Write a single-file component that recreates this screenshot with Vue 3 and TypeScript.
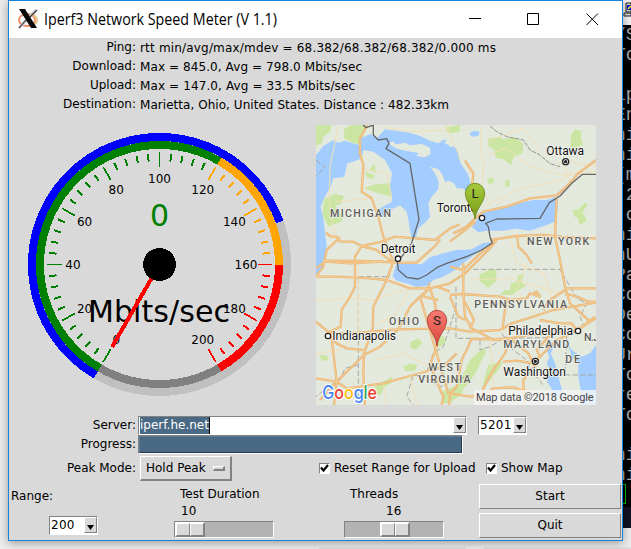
<script setup lang="ts">
interface Tick {
  x1: number
  y1: number
  x2: number
  y2: number
  color: string
  width: number
}

const readings: { label: string; value: string; width: number }[] = [
  { label: 'Ping:', value: 'rtt min/avg/max/mdev = 68.382/68.382/68.382/0.000 ms', width: 356 },
  { label: 'Download:', value: 'Max = 845.0, Avg = 798.0 Mbits/sec', width: 222 },
  { label: 'Upload:', value: 'Max = 147.0, Avg = 33.5 Mbits/sec', width: 215 },
  { label: 'Destination:', value: 'Marietta, Ohio, United States. Distance : 482.33km', width: 309 },
]

const cx = 150.5
const cy = 150.5

function point(value: number, radius: number): [number, number] {
  const a = ((240 - value * 1.5) * Math.PI) / 180
  return [cx + radius * Math.cos(a), cy - radius * Math.sin(a)]
}

function arc(from: number, to: number, radius: number): string {
  const [x1, y1] = point(from, radius)
  const [x2, y2] = point(to, radius)
  const large = (to - from) * 1.5 > 180 ? 1 : 0
  return `M${x1} ${y1}A${radius} ${radius} 0 ${large} 1 ${x2} ${y2}`
}

const ticks: Tick[] = []
for (let v = 0; v <= 200; v += 4) {
  const major = v % 20 === 0
  const [x1, y1] = point(v, major ? 112.5 : 111)
  const [x2, y2] = point(v, major ? 98 : 103.5)
  const color = v < 120 ? '#008000' : v < 160 ? '#ffa500' : '#ff0000'
  ticks.push({ x1, y1, x2, y2, color, width: major ? 1.7 : 2 })
}

const scaleLabels = Array.from({ length: 11 }, (_, i) => {
  const [x, y] = point(i * 20, 86.5)
  return { text: String(i * 20), x, y: y + 4.8 }
})

const terminal: string[] = ['/S', 'To', '', 'ip', 'En', 'ni', 'ni', '[m', ' 2', ' o', 'ni', 'nU', 'Pa', 'Co', 'De', 'Co', 'Ur', 'To', 're', 'To', '', 'ni', 'ni']

const water: string[] = [
  'M18 105L40 78L70 60L85 68L105 62L145 75L152 55L180 42L200 55L225 28L300 38L330 48L360 62L385 70L402 58L420 70L440 85L452 130L475 165L485 205L475 215L455 205L440 205L432 190L415 182L405 187L398 165L385 148L360 140L375 160L386 185L385 208L365 230L355 250L360 290L345 308L325 325L318 352H304L295 300L290 275L270 256L240 270L222 290L205 290L210 265L245 246V222L240 200L246 160L225 120L190 95L160 90L155 115L130 125L112 130L103 170L70 175L62 200L44 230L32 260L40 295L45 335L50 380L42 440L18 465Z',
  'M290 378L312 380L307 396L290 398Z',
  'M263 420L280 432L335 433L360 412L400 400L440 390L485 388L520 368L548 366L543 376L500 400L465 425L440 447L400 470L370 480L350 498L318 500L290 490L260 482L248 468Z',
  'M500 300L512 285L530 272L570 268L620 252L670 240L710 240L735 232L744 260L735 305L710 315L660 332L620 326L580 332L530 332L505 337L486 322Z',
  'M708 680L725 665L735 675L722 700L735 730L750 790L765 835L720 835L725 805L710 785L722 760L710 730L718 712Z',
  'M755 655L775 675L785 710L805 730V770L812 810V855H858V675L840 700L815 710L785 690L768 662Z',
  'M478 40L492 32L510 35L505 48L485 50Z',
]

const islands: string[] = [
  'M235 70L248 64L258 73L285 68L300 76L335 72L360 83L362 102L345 112L320 108L325 99L290 93L260 86Z',
  'M400 66L420 62L436 74L424 82Z',
]

const parks: string[] = [
  'M18 15H65L60 35L40 50L35 70L18 77Z',
  'M103 25L125 15H175L160 45L155 75L130 68L102 55Z',
  'M178 150L194 130L198 160Z',
  'M160 205L195 193L245 190V230L205 220Z',
  'M165 155L195 165L190 178L168 170Z',
  'M42 238L75 222L102 228L95 250L75 258L98 285L95 305L55 320L38 285Z',
  'M405 22L450 15L448 37L415 40Z',
  'M535 55L565 50L580 58L610 50L640 70L638 100L612 110L603 136L580 118L558 115L552 88L535 78Z',
  'M530 180L545 172L555 182L540 195Z',
  'M585 183L600 180L598 200L586 201Z',
  'M785 40L795 28L815 32L812 50L820 72L800 85L780 80Z',
  'M808 265L825 247L833 255L818 275L830 302L810 315L800 290L792 290L788 270L805 270Z',
  'M508 465L540 448L560 448L558 485L535 503L510 485Z',
  'M625 465L642 462L635 490L650 495L605 525L570 525L585 510L600 510L602 490L620 485Z',
  'M302 665L325 655L337 670L318 690L300 682Z',
  'M280 740L300 730L322 735L315 752L285 754Z',
  'M382 655L400 648L408 665L392 680L375 678Z',
  'M175 815L210 790L245 770L250 785L225 800L210 825L185 830Z',
  'M28 705L52 707L55 720L35 723Z',
  'M480 720L520 682L528 695L510 730L500 755L475 790L440 830L420 850H390L420 825L455 775Z',
  'M535 735L580 725L565 750L540 780L518 795Z',
  'M395 815L430 800L460 815L440 835L400 850Z',
]

const roads: string[] = [
  'M172 15L150 55V100L160 135L155 215L185 235L205 290L220 350L250 425L230 480L190 560L188 625L162 700L160 760L165 855',
  'M48 338L62 350H80L90 365L130 365L155 378L215 365L255 350L375 360L420 325L450 313',
  'M40 422L160 423L265 428L320 428L378 375L390 358',
  'M90 352L50 390L40 440L18 470',
  'M155 378L135 410V500L120 530L95 570L92 620L50 640',
  'M155 378L200 390L245 425',
  'M18 445L45 425L120 430L220 425',
  'M18 470L80 470L180 475L230 480L300 505L360 505L420 490L465 460L540 385L560 360',
  'M358 505L330 530L300 560L265 628L210 680L162 705L80 785L30 840',
  'M360 505L375 550L385 620L380 680L360 735L380 785L400 830L395 855',
  'M18 605L60 640H120L260 628L420 625L480 635L570 630L605 610L670 590L730 570L858 548',
  'M50 640L80 670L110 685L160 690',
  'M65 655L80 785L110 805L220 790L310 765L400 740L440 700',
  'M80 785L18 775M80 785L72 855',
  'M430 340L470 320L495 295L520 275L590 260L660 235L740 226L780 190L805 160L858 120',
  'M496 305L465 330L420 365',
  'M540 360L620 348L700 345L755 350L858 355',
  'M740 235L738 280L735 350L750 420L765 500L780 550L840 605',
  'M560 360L510 400L460 450L420 440',
  'M622 350L625 380L650 405L665 430',
  'M420 525L455 522L500 525L570 530L600 540L650 535L660 520L690 530L680 515L670 520',
  'M460 430V520L465 590L485 625L550 660L600 655L650 645L720 640L790 630',
  'M465 600L445 590L420 530M465 545L492 600L480 625',
  'M590 540L585 570L577 630',
  'M485 655L470 690L455 720L440 800L420 820L418 855',
  'M485 657L555 658L600 655L585 700L550 750L520 805L510 855',
  'M580 725L620 722L670 730L710 690L740 660L805 630L855 590',
  'M670 730L655 700L625 675L600 655M690 710L680 690L720 645M680 730L640 780L642 855',
  'M765 505L858 505M765 520L800 530L835 545H858',
  'M690 600L750 610L785 610L800 630L858 595M700 570L720 540L765 510',
  'M420 820L480 830L525 825L550 805L610 802L660 820',
  'M465 122L490 160L485 210L490 250',
  'M415 820L330 530M360 490L340 530L385 540M420 515L380 500',
]

const minorRoads: string[] = [
  'M410 15L430 70L445 100L450 120M420 15L405 30L300 35L225 22',
  'M512 20V80L520 130L516 205L540 255M730 150L755 122L800 130L858 137M760 125L780 195M566 250L590 232',
  'M85 18L60 140L58 240L75 355M155 145L230 160L245 240M185 235L75 245',
  'M530 105L590 85L660 140L755 165L858 155M520 260L620 210L750 180L858 130M540 60L640 25L690 90',
  'M18 540L135 535L190 540L300 505M18 700L90 690L145 640V430M190 620L260 580L300 500',
  'M600 350L620 430L700 460L740 580M480 480L600 475L750 520M650 430L620 510L690 600',
  'M220 790L230 855M300 765L320 855M200 720L280 700L360 740M540 660L550 800M600 800L710 820',
]

const frontier = 'M155 10L168 23L190 15V45L205 60L230 56L237 70L228 86L300 130L327 298L303 375L275 410L262 425L265 450L290 472L325 477L350 465L380 443L410 430L470 410L515 390L547 369L540 350L535 320L527 310L560 297L690 295L718 248L750 228L785 190L818 163H858'
const dashed = 'M145 860V470H240M18 120L45 142L18 168M438 500V655H590L720 653M490 448H750L780 500L800 535L830 550L810 590L820 615L780 640M510 660V690L540 680L590 650M438 560L420 620L400 680L370 700L345 770L310 765L290 830L310 855M145 735L105 745L90 780L55 800L18 830M345 770L390 800L480 765M575 640L610 690L650 720L670 760L700 795M770 650L765 765H858'
const provincial = 'M540 18L560 35L590 50L640 60L660 90L690 105L718 130L750 140'

const regions = [
  { t: 'MICHIGAN', x: 60, y: 291, w: 183 },
  { t: 'NEW YORK', x: 651, y: 375, w: 187 },
  { t: 'OHIO', x: 237, y: 615, w: 90 },
  { t: 'PENNSYLVANIA', x: 493, y: 564, w: 278 },
  { t: 'WEST', x: 355, y: 754, w: 98 },
  { t: 'VIRGINIA', x: 325, y: 789, w: 157 },
  { t: 'MARYLAND', x: 580, y: 684, w: 198 },
  { t: 'DE', x: 766, y: 729, w: 44 },
  { t: 'N.J.', x: 822, y: 663, w: 52 },
]
const cities = [
  { t: 'Detroit', x: 212, y: 399, w: 104 },
  { t: 'Ottawa', x: 709, y: 105, w: 113 },
  { t: 'Toronto', x: 380, y: 276, w: 122 },
  { t: 'Indianapolis', x: 67, y: 660, w: 191 },
  { t: 'Philadelphia', x: 595, y: 645, w: 194 },
  { t: 'Washington', x: 580, y: 768, w: 188 },
]
const towns: [number, number][] = [[264, 416], [516, 294], [54, 648], [804, 633]]
const capitals: [number, number][] = [[767, 125], [676, 724]]
</script>

<template>
  <div class="desktop">
    <main class="window">
      <header class="titlebar">
        <svg class="x-logo" viewBox="0 0 20 20">
          <ellipse cx="9" cy="11" rx="8" ry="6" fill="none" stroke="#ee8e66" stroke-width="2" />
          <path d="M12 5a8 6 0 0 1 3 11" fill="none" stroke="#e6c68a" stroke-width="2.4" />
          <path d="M1 19L18 1" stroke="#ccc" stroke-width="3" />
          <path d="M1 19L8 11M12 8L19 1" stroke="#333" stroke-width="1.1" />
          <path d="M1 0H7L19 19H13Z" fill="#080808" />
        </svg>
        <h1><svg width="236" height="26"><text x="1" y="18" textLength="233" lengthAdjust="spacingAndGlyphs">Iperf3 Network Speed Meter (V 1.1)</text></svg></h1>
        <svg class="controls" width="132" height="14" viewBox="0 0 132 14" fill="none" stroke="#000">
          <path d="M0 7.5H12M58.5 2.5H69.5V13.5H58.5ZM117.5 2.5L129 14M129 2.5L117.5 14" />
        </svg>
      </header>

      <section class="readings">
        <div v-for="r in readings" :key="r.label" class="reading">
          <span class="label">{{ r.label }}</span>
          <svg width="370" height="19"><text x="0" y="14" :textLength="r.width">{{ r.value }}</text></svg>
        </div>
      </section>

      <section class="visuals">
        <svg class="gauge" width="300" height="302" viewBox="0 0 300 302">
          <g fill="none" stroke-width="8" shape-rendering="crispEdges">
            <circle :cx="cx" :cy="cy" r="127.5" stroke="#c0c0c0" />
            <path :d="arc(0, 147, 127.5)" stroke="#0000ff" />
            <path :d="arc(200, 240, 119.5)" stroke="#808080" />
            <path :d="arc(0, 120, 119.5)" stroke="#008000" />
            <path :d="arc(120, 160, 119.5)" stroke="#ffa500" />
            <path :d="arc(160, 200, 119.5)" stroke="#ff0000" />
          </g>
          <line v-for="(t, i) in ticks" :key="i" :x1="t.x1" :y1="t.y1" :x2="t.x2" :y2="t.y2" :stroke="t.color" :stroke-width="t.width" shape-rendering="crispEdges" />
          <g class="scale">
            <text v-for="l in scaleLabels" :key="l.text" :x="l.x" :y="l.y">{{ l.text }}</text>
          </g>
          <text class="big" x="150.5" y="112" fill="#008000">0</text>
          <text class="big" x="150" y="208" textLength="142">Mbits/sec</text>
          <line :x1="cx" :y1="cy" x2="103" y2="233" stroke="#ff0000" stroke-width="4" shape-rendering="crispEdges" />
          <circle :cx="cx" :cy="cy" r="16.5" fill="#000" shape-rendering="crispEdges" />
        </svg>

        <svg class="map" width="280" height="280" viewBox="18 15 840 840">
          <defs>
            <linearGradient id="pinGreen" x1="0" y1="0" x2="0" y2="1">
              <stop offset="0" stop-color="#a8cb3d" />
              <stop offset="1" stop-color="#769b14" />
            </linearGradient>
            <linearGradient id="pinRed" x1="0" y1="0" x2="0" y2="1">
              <stop offset="0" stop-color="#f87a70" />
              <stop offset="1" stop-color="#d9483e" />
            </linearGradient>
          </defs>
          <rect x="18" y="15" width="840" height="840" fill="#e4e9de" />
          <path v-for="d in parks" :key="d" :d="d" fill="#cbe6a3" />
          <path v-for="d in water" :key="d" :d="d" fill="#a3ccff" />
          <path v-for="d in islands" :key="d" :d="d" fill="#e4e9de" />
          <g fill="none" stroke-linejoin="round">
            <path :d="dashed" stroke="#a5a8a3" stroke-width="3" stroke-dasharray="16 7" />
            <path :d="provincial" stroke="#92958f" stroke-width="3" stroke-dasharray="14 3" />
            <path v-for="d in minorRoads" :key="d" :d="d" stroke="#f3dfb8" stroke-width="3" />
            <path v-for="d in roads" :key="d" :d="d" stroke="#e7b477" stroke-width="7" />
            <path v-for="d in roads" :key="d" :d="d" stroke="#f8ce90" stroke-width="3" />
            <path :d="frontier" stroke="#646869" stroke-width="4" />
          </g>
          <g fill="#fff" stroke="#222" stroke-width="4">
            <circle v-for="p in towns" :key="p[0]" :cx="p[0]" :cy="p[1]" r="8" />
            <circle v-for="p in capitals" :key="p[0]" :cx="p[0]" :cy="p[1]" r="9" />
            <circle v-for="p in capitals" :key="p[1]" :cx="p[0]" :cy="p[1]" r="3" fill="#222" />
          </g>
          <g class="region">
            <text v-for="r in regions" :key="r.t" :x="r.x" :y="r.y" :textLength="r.w">{{ r.t }}</text>
          </g>
          <g class="city">
            <text v-for="c in cities" :key="c.t" :x="c.x" :y="c.y" :textLength="c.w">{{ c.t }}</text>
          </g>
          <path d="M495 297C491 262 466 248 466 219A29 29 0 0 1 524 219C524 248 499 262 495 297Z" fill="url(#pinGreen)" stroke="#66851b" stroke-width="2.5" />
          <text class="pin" x="495" y="233">L</text>
          <path d="M381 678C377 643 352 629 352 600A29 29 0 0 1 410 600C410 629 385 643 381 678Z" fill="url(#pinRed)" stroke="#a63832" stroke-width="2.5" />
          <text class="pin" x="381" y="615">S</text>
          <rect x="492" y="810" width="366" height="45" fill="#f5f5f5" fill-opacity=".82" />
          <text class="credit" x="498" y="842" textLength="353">Map data ©2018 Google</text>
          <text class="google" x="37" y="836" textLength="164" lengthAdjust="spacingAndGlyphs"><tspan fill="#4285f4">G</tspan><tspan fill="#ea4335">o</tspan><tspan fill="#fbbc05">o</tspan><tspan fill="#4285f4">g</tspan><tspan fill="#34a853">l</tspan><tspan fill="#ea4335">e</tspan></text>
        </svg>
      </section>

      <section class="form">
        <div class="row server">
          <span class="label">Server:</span>
          <div class="combo host"><span class="entry"><span class="selected">iperf.he.net</span></span><span class="arrow"><svg width="7" height="5"><path d="M0 0H7L3.5 5Z" /></svg></span></div>
          <div class="combo small"><span class="entry">5201</span><span class="arrow"><svg width="7" height="5"><path d="M0 0H7L3.5 5Z" /></svg></span></div>
        </div>
        <div class="row progress">
          <span class="label">Progress:</span>
          <div class="bar"><div class="fill"></div></div>
        </div>
        <div class="row peak">
          <span class="label">Peak Mode:</span>
          <button class="option">Hold Peak<i></i></button>
          <label class="check first"><span class="box"><svg width="9" height="9"><path d="M1 3.5L3.5 6.5L8 1" fill="none" stroke="#000" stroke-width="2.2" /></svg></span><span class="check-text">Reset Range for Upload</span></label>
          <label class="check"><span class="box"><svg width="9" height="9"><path d="M1 3.5L3.5 6.5L8 1" fill="none" stroke="#000" stroke-width="2.2" /></svg></span><span class="check-text">Show Map</span></label>
        </div>
      </section>

      <footer class="bottom">
        <div class="range">
          <span>Range:</span>
          <div class="combo small"><span class="entry">200</span><span class="arrow"><svg width="7" height="5"><path d="M0 0H7L3.5 5Z" /></svg></span></div>
        </div>
        <div class="slider duration">
          <span class="name">Test Duration</span>
          <span class="val">10</span>
          <div class="trough"><div class="thumb"><i></i><i></i></div></div>
        </div>
        <div class="slider threads">
          <span class="name">Threads</span>
          <span class="val">16</span>
          <div class="trough"><div class="thumb"><i></i><i></i></div></div>
        </div>
        <div class="buttons">
          <button>Start</button>
          <button>Quit</button>
        </div>
      </footer>
    </main>

    <aside class="behind">
      <div class="caption"><svg width="8" height="16"><path d="M3 1H8V10H3ZM1 11H8V14H1Z" fill="#d8d8d8" stroke="#222" /><path d="M4 3H8V8H4Z" fill="#1010d0" /><path d="M5 7L8 4" stroke="#ff0" stroke-width="1.5" /></svg></div>
      <div class="terminal">
        <span v-for="(line, i) in terminal" :key="i">{{ line }}</span>
        <i class="cursor"></i>
      </div>
      <div class="taskbar"></div>
    </aside>
    <div class="shelf"><i></i><i></i></div>
  </div>
</template>

<style>
body {
  overflow: hidden;
}
</style>

<style scoped>
* {
  box-sizing: border-box;
}
.desktop {
  width: 631px;
  height: 549px;
  overflow: hidden;
  display: grid;
  grid-template: 541px 8px / 615px 8px;
  padding-left: 8px;
  background: #ececec;
  font: 12px/19px 'DejaVu Sans', sans-serif;
  color: #000;
}
.window {
  border: 1px solid #1883d7;
  background: #d9d9d9;
  display: flex;
  flex-direction: column;
  box-shadow: 0 2px 9px rgba(0, 0, 0, 0.35);
  z-index: 1;
}
.titlebar {
  height: 37px;
  flex: none;
  background: #fff;
  display: flex;
  padding-left: 9px;
}
.x-logo {
  width: 20px;
  height: 20px;
  margin-top: 8px;
}
h1 {
  margin: 6px 0 0 5px;
  height: 26px;
  font: 16px 'Open Sans', sans-serif;
}
h1 svg {
  display: block;
  overflow: visible;
}
.controls {
  margin: 10px 21px 0 auto;
}
.readings {
  height: 76px;
  flex: none;
}
.reading {
  display: flex;
  gap: 4px;
  height: 19px;
}
.label {
  width: 127px;
  flex: none;
  text-align: right;
  white-space: nowrap;
}
.visuals {
  height: 302px;
  flex: none;
  display: flex;
}
.gauge {
  flex: none;
}
.map {
  margin: 11px 0 0 7px;
  flex: none;
}
.scale text {
  text-anchor: middle;
}
.big {
  font-size: 30px;
  text-anchor: middle;
}
.region text {
  font: 500 32px Roboto, sans-serif;
  fill: #5c5c58;
  stroke: #f1f3ed;
  stroke-width: 4px;
  paint-order: stroke;
}
.city text {
  font: 36px Roboto, sans-serif;
  fill: #111;
  stroke: #f4f5f0;
  stroke-width: 5px;
  paint-order: stroke;
}
.pin {
  font: 40px Roboto, sans-serif;
  fill: #222;
  text-anchor: middle;
}
.credit {
  font: 33px Roboto, sans-serif;
  fill: #444;
}
.google {
  font: 500 55px Inter, sans-serif;
  stroke: #fff;
  stroke-width: 6px;
  paint-order: stroke;
}
.form {
  height: 67px;
  flex: none;
}
.row {
  display: flex;
}
.server,
.progress {
  height: 19px;
}
.combo {
  height: 19px;
  display: flex;
  background: #fff;
  border: 1px solid;
  border-color: #828282 #fff #fff #828282;
  line-height: 17px;
}
.host {
  width: 329px;
  margin: 0 11px 0 2px;
}
.small {
  width: 49px;
}
.entry {
  flex: 1;
  padding-left: 1px;
  white-space: nowrap;
}
.small .entry {
  letter-spacing: 0.25px;
}
.selected {
  display: inline-block;
  height: 17px;
  background: #4a6984;
  color: #fff;
  border-right: 1px solid #000;
}
.arrow {
  width: 13px;
  height: 16px;
  flex: none;
  background: #d9d9d9;
  border: 1px solid;
  border-color: #fff #828282 #828282 #fff;
  display: flex;
  align-items: flex-end;
  justify-content: center;
  padding-bottom: 2px;
}
.bar {
  width: 325px;
  height: 19px;
  margin-left: 2px;
  border: 1px solid;
  border-color: #828282 #fff #fff #828282;
}
.fill {
  height: 17px;
  background: #4a6984;
  border: 1px solid;
  border-color: #5f7b93 #27394a #27394a #5f7b93;
}
.peak {
  height: 29px;
  padding-top: 2px;
}
.peak .label {
  line-height: 25px;
}
button {
  font: inherit;
  color: inherit;
  padding: 0;
  background: #d9d9d9;
  border: 1px solid;
  border-color: #fff #828282 #828282 #fff;
}
.option {
  width: 92px;
  height: 25px;
  margin-left: 4px;
  padding-left: 5px;
  border-width: 1px 2px 2px 1px;
  display: flex;
  align-items: center;
  white-space: nowrap;
}
.option i {
  width: 12px;
  height: 5px;
  margin-left: auto;
  margin-right: 5px;
  border: 1px solid;
  border-width: 1px 2px 2px 1px;
  border-color: #fff #828282 #828282 #fff;
}
.check {
  display: flex;
  height: 25px;
  align-items: center;
  gap: 4px;
  white-space: nowrap;
}
.check.first {
  width: 167px;
  margin-left: 87px;
}
.box {
  width: 11px;
  height: 11px;
  background: #fff;
  border: 1px solid;
  border-color: #828282 #fff #fff #828282;
  display: flex;
}
.bottom {
  flex: 1;
  display: flex;
}
.range {
  width: 165px;
  padding: 4px 0 0 2px;
}
.range .combo {
  margin: 10px 0 0 38px;
}
.slider {
  width: 170px;
  display: flex;
  flex-direction: column;
}
.threads {
  width: 135px;
}
.name {
  padding-left: 6px;
  padding-top: 2px;
  height: 19px;
}
.val {
  height: 19px;
  padding-left: 7px;
}
.threads .val {
  padding-left: 42px;
}
.trough {
  width: 100px;
  height: 17px;
  background: #b3b3b3;
  border: 1px solid;
  border-color: #828282 #fff #fff #828282;
}
.thumb {
  width: 30px;
  height: 15px;
  display: flex;
  border: 1px solid;
  border-color: #fff #828282 #828282 #fff;
}
.thumb i {
  flex: 1;
  background: #d9d9d9;
  border: 1px solid;
  border-color: #fff #828282 #828282 #fff;
}
.threads .thumb {
  margin-left: 35px;
}
.buttons {
  padding-top: 1px;
  display: flex;
  flex-direction: column;
  gap: 4px;
}
.buttons button {
  width: 142px;
  height: 25px;
}
.behind {
  overflow: hidden;
  display: flex;
  flex-direction: column;
}
.caption {
  height: 25px;
  flex: none;
  background: #f0f0f0;
  padding-top: 2px;
}
.terminal {
  height: 482px;
  flex: none;
  background: #000;
  color: #a5a9b0;
  font: 18px/20px 'Liberation Mono', monospace;
  overflow: hidden;
}
.terminal span {
  display: block;
  height: 20px;
  margin-left: -8px;
  white-space: pre;
}
.cursor {
  display: block;
  width: 3px;
  height: 20px;
  margin-top: -1px;
  border: 1px solid #00c000;
  border-left: 0;
}
.taskbar {
  height: 21px;
  flex: none;
  background: #111122;
}
.shelf {
  grid-column: 1 / 3;
  display: flex;
  gap: 18px;
  padding: 6px 0 0 311px;
}
.shelf i {
  width: 194px;
  height: 3px;
  background: #dedede;
}
</style>
